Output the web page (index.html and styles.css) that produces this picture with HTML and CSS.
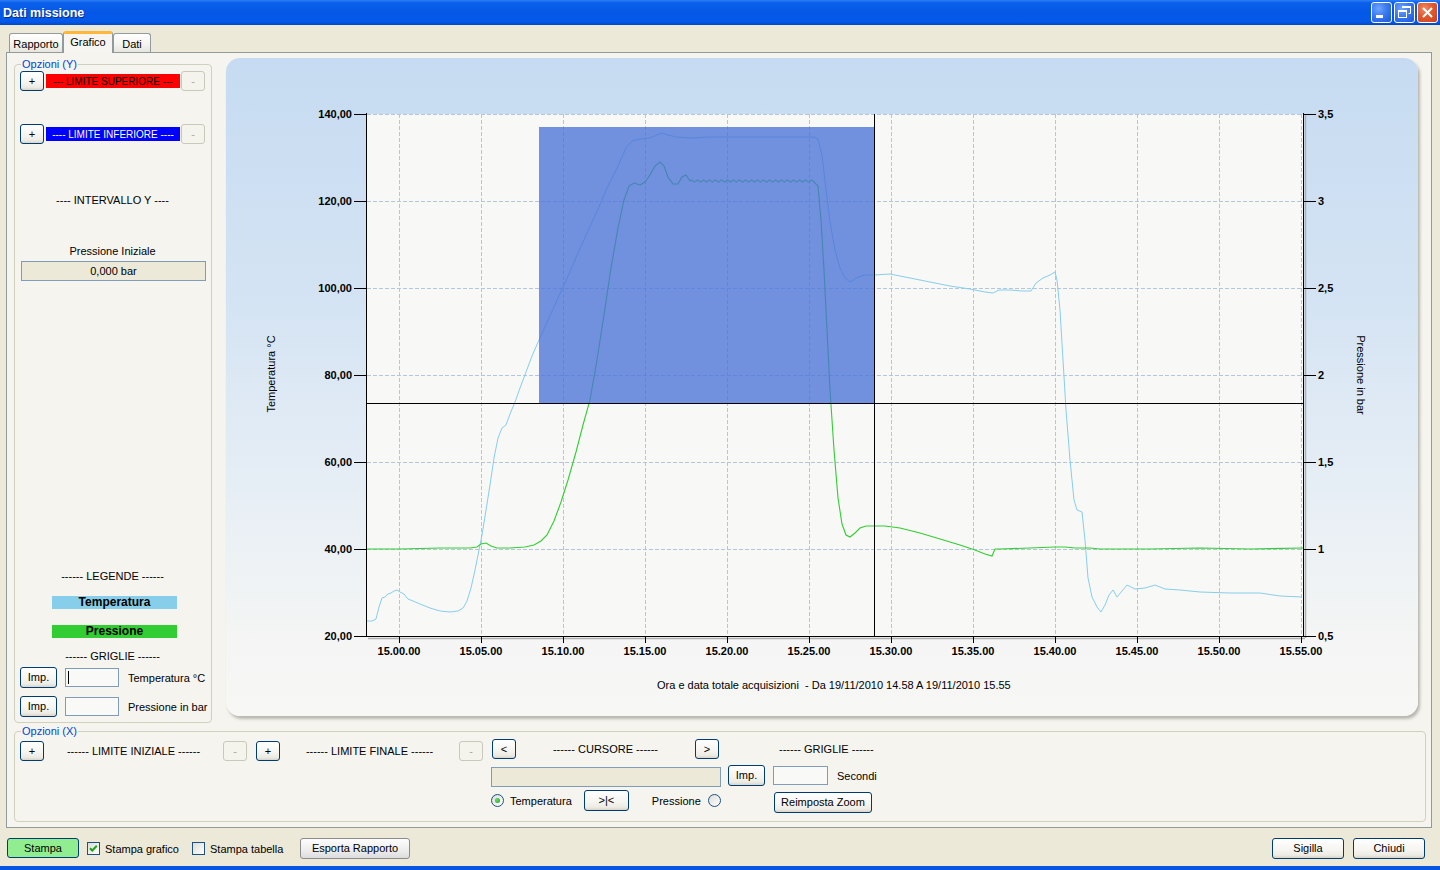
FILE: index.html
```html
<!DOCTYPE html>
<html lang="it">
<head>
<meta charset="utf-8">
<title>Dati missione</title>
<link rel="stylesheet" href="styles.css">
</head>
<body>
<div class="window">
  <div class="titlebar">
    <span class="title">Dati missione</span>
    <div class="tb-btns">
      <span class="tbb blue"><svg width="19" height="19" viewBox="0 0 19 19"><rect x="4" y="12" width="7" height="3" fill="#fff"/></svg></span>
      <span class="tbb blue"><svg width="19" height="19" viewBox="0 0 19 19"><path d="M7.5 3.5h8v7h-2" fill="none" stroke="#fff"/><rect x="7" y="3" width="9" height="2" fill="#fff"/><rect x="3.5" y="7.5" width="8" height="7" fill="none" stroke="#fff"/><rect x="3" y="7" width="9" height="2" fill="#fff"/></svg></span>
      <span class="tbb red"><svg width="19" height="19" viewBox="0 0 19 19"><path d="M5 5L14 14M14 5L5 14" stroke="#fff" stroke-width="2"/></svg></span>
    </div>
  </div>
  <div class="client">
    <div class="tabs">
      <span class="tab t-rap">Rapporto</span>
      <span class="tab t-gra active">Grafico</span>
      <span class="tab t-dat">Dati</span>
    </div>
    <div class="tabpanel">
      <div class="toprow">
        <fieldset class="group yopts">
          <legend>Opzioni (Y)</legend>
          <div class="yinner">
            <div class="limrow">
              <span class="btn b24">+</span>
              <span class="lim red">--- LIMITE SUPERIORE ---</span>
              <span class="btn b24 dis">-</span>
            </div>
            <div class="limrow second">
              <span class="btn b24">+</span>
              <span class="lim blue">---- LIMITE INFERIORE ----</span>
              <span class="btn b24 dis">-</span>
            </div>
            <div class="ctext t-int">---- INTERVALLO Y ----</div>
            <div class="ctext t-pi">Pressione Iniziale</div>
            <div class="rbox">0,000 bar</div>
            <div class="spacer"></div>
            <div class="ctext t-leg">------ LEGENDE ------</div>
            <div class="legbar temp">Temperatura</div>
            <div class="legbar pres">Pressione</div>
            <div class="ctext t-gr">------ GRIGLIE ------</div>
            <div class="improw first"><span class="btn b37">Imp.</span><span class="inp"><i class="caret"></i></span><span class="lbl">Temperatura °C</span></div>
            <div class="improw second"><span class="btn b37">Imp.</span><span class="inp"></span><span class="lbl">Pressione in bar</span></div>
          </div>
        </fieldset>
        <div class="chart">
          <svg class="plot" width="1192" height="658" viewBox="226 58 1192 658">
            <rect x="367" y="114" width="936" height="522" fill="#F8F8F6"/>
            <g class="grid">
              <path d="M367 114.5H1303M367 201.5H1303M367 288.5H1303M367 375.5H1303M367 462.5H1303M367 549.5H1303"/>
              <path d="M399.5 114V636M481.5 114V636M563.5 114V636M645.5 114V636M727.5 114V636M809.5 114V636M891.5 114V636M973.5 114V636M1055.5 114V636M1137.5 114V636M1219.5 114V636M1301.5 114V636"/>
            </g>
            <polyline class="c-temp" points="367,621 372,621 376,619 379,607 382,598 385,597 388,594 391,593 394,591 397,590 400,592 404,594 408,599 413,601 420,604 430,608 440,611 450,612 458,611 463,608 467,601 471,588 475,570 479,550 482,535 486,510 490,485 494,458 498,438 502,428 506,425 510,414 515,402 520,388 526,372 532,356 539,340 548,320 558,298 568,276 578,253 588,231 598,209 608,186 618,166 626,148 632,141 640,139 650,138 657,135 662,133 668,135 676,137 690,138 710,137 740,137 770,137 800,137 814,137 818,139 822,155 826,190 830,222 835,250 840,268 845,278 850,282 856,278 864,275 874,275 890,274 910,278 930,282 950,286 970,289 985,292 993,293 999,290 1010,290 1022,291 1031,291 1036,283 1043,278 1050,275 1055,272 1057,280 1060,310 1063,360 1066,410 1070,460 1074,500 1077,510 1082,512 1085,540 1088,578 1092,597 1097,607 1101,612 1105,605 1109,595 1113,590 1117,597 1122,591 1127,585 1135,589 1145,588 1155,585 1165,589 1180,590 1200,592 1230,593 1260,593 1280,596 1302,597"/>
            <path class="c-pres" d="M367,549 L400,549 440,548 470,548 477,547 481,544 486,543 491,546 497,548 510,548 525,547 534,545 541,541 547,535 554,521 561,502 568,480 576,452 583,425 590,400 597,360 604,315 611,268 618,228 624,200 629,186 634,183 640,185 645,182 650,175 655,166 660,162 664,166 668,177 673,184 678,184 682,177 686,175 690,181 q1.5,-2 3,0 t3,0 t3,0 t3,0 t3,0 t3,0 t3,0 t3,0 t3,0 t3,0 t3,0 t3,0 t3,0 t3,0 t3,0 t3,0 t3,0 t3,0 t3,0 t3,0 t3,0 t3,0 t3,0 t3,0 t3,0 t3,0 t3,0 t3,0 t3,0 t3,0 t3,0 t3,0 t3,0 t3,0 t3,0 t3,0 t3,0 t3,0 t3,0 t3,0 t3,0 L818,186 821,220 824,270 827,330 830,390 834,450 838,498 842,524 846,535 850,537 855,533 860,528 866,526 874,526 885,526 900,528 920,533 940,539 960,545 975,550 985,554 992,556 995,549 1000,549 1030,548 1055,547 1065,547 1075,548 1090,548 1100,549 1150,549 1200,548 1250,549 1303,548"/>
            <rect class="sel" x="539" y="127" width="335" height="276"/>
            <path class="cursor" d="M874.5 114V636M367 403.5H1303"/>
            <path class="shadow" d="M368 638.5H1305M1305.5 114V638"/>
            <path class="axis" d="M366.5 113V637M366 636.5H1304M1303.5 113V637"/>
            <path class="axis" d="M354 114.5H366M354 201.5H366M354 288.5H366M354 375.5H366M354 462.5H366M354 549.5H366M354 636.5H366M1304 114.5H1316M1304 201.5H1316M1304 288.5H1316M1304 375.5H1316M1304 462.5H1316M1304 549.5H1316M1304 636.5H1316M399.5 637V643M481.5 637V643M563.5 637V643M645.5 637V643M727.5 637V643M809.5 637V643M891.5 637V643M973.5 637V643M1055.5 637V643M1137.5 637V643M1219.5 637V643M1301.5 637V643"/>
            <g class="lbl-l">
              <text x="352" y="118">140,00</text>
              <text x="352" y="205">120,00</text>
              <text x="352" y="292">100,00</text>
              <text x="352" y="379">80,00</text>
              <text x="352" y="466">60,00</text>
              <text x="352" y="553">40,00</text>
              <text x="352" y="640">20,00</text>
            </g>
            <g class="lbl-r">
              <text x="1318" y="118">3,5</text>
              <text x="1318" y="205">3</text>
              <text x="1318" y="292">2,5</text>
              <text x="1318" y="379">2</text>
              <text x="1318" y="466">1,5</text>
              <text x="1318" y="553">1</text>
              <text x="1318" y="640">0,5</text>
            </g>
            <g class="lbl-b">
              <text x="399" y="655">15.00.00</text>
              <text x="481" y="655">15.05.00</text>
              <text x="563" y="655">15.10.00</text>
              <text x="645" y="655">15.15.00</text>
              <text x="727" y="655">15.20.00</text>
              <text x="809" y="655">15.25.00</text>
              <text x="891" y="655">15.30.00</text>
              <text x="973" y="655">15.35.00</text>
              <text x="1055" y="655">15.40.00</text>
              <text x="1137" y="655">15.45.00</text>
              <text x="1219" y="655">15.50.00</text>
              <text x="1301" y="655">15.55.00</text>
            </g>
            <text class="atitle" transform="translate(275 374) rotate(-90)">Temperatura °C</text>
            <text class="atitle" transform="translate(1357 375) rotate(90)">Pressione in bar</text>
            <text class="caption" x="657" y="689">Ora e data totale acquisizioni  - Da 19/11/2010 14.58 A 19/11/2010 15.55</text>
          </svg>
        </div>
      </div>
      <fieldset class="group xopts">
        <legend>Opzioni (X)</legend>
        <div class="xinner">
          <div class="limits">
            <span class="btn b24">+</span>
            <span class="xlab">------ LIMITE INIZIALE ------</span>
            <span class="btn b24 dis">-</span>
            <span class="btn b24 gapl">+</span>
            <span class="xlab">------ LIMITE FINALE ------</span>
            <span class="btn b24 dis">-</span>
          </div>
          <div class="cursor-grp">
            <div class="crow1">
              <span class="btn b24">&lt;</span>
              <span class="xlab">------ CURSORE ------</span>
              <span class="btn b24">&gt;</span>
            </div>
            <div class="cbox"></div>
            <div class="crow3">
              <span class="radio checked"></span>
              <span class="rl1">Temperatura</span>
              <span class="btn b45">&gt;|&lt;</span>
              <span class="rl2">Pressione</span>
              <span class="radio"></span>
            </div>
          </div>
          <div class="grid-grp">
            <div class="grow1">------ GRIGLIE ------</div>
            <div class="grow2"><span class="btn b37">Imp.</span><span class="inp w55"></span><span class="lbl">Secondi</span></div>
            <div class="grow3"><span class="btn b98">Reimposta Zoom</span></div>
          </div>
        </div>
      </fieldset>
    </div>
    <div class="bottombar">
      <div class="bleft">
        <span class="btn stampa">Stampa</span>
        <span class="chk checked"><svg width="11" height="11" viewBox="0 0 11 11"><path d="M2 5.2L4.3 7.5L8.8 2.8" fill="none" stroke="#21A121" stroke-width="2"/></svg></span>
        <span class="chklbl">Stampa grafico</span>
        <span class="chk"></span>
        <span class="chklbl">Stampa tabella</span>
        <span class="btn esporta">Esporta Rapporto</span>
      </div>
      <div class="bright">
        <span class="btn b72">Sigilla</span>
        <span class="btn b72">Chiudi</span>
      </div>
    </div>
  </div>
  <div class="frame-bottom"></div>
</div>
</body>
</html>
```
FILE: styles.css
```css
* { box-sizing: border-box; }
html, body { margin: 0; padding: 0; }
body {
  width: 1440px;
  height: 870px;
  overflow: hidden;
  background: #ECE9D8;
  font-family: "Liberation Sans", Arial, sans-serif;
  font-size: 11px;
  color: #000;
}
.window { display: flex; flex-direction: column; height: 870px; }

/* title bar */
.titlebar {
  height: 25px;
  flex: none;
  display: flex;
  align-items: center;
  justify-content: space-between;
  padding: 0 2px 0 3px;
  background: linear-gradient(#2C7CF4 0%, #0A5FEA 12%, #0558E6 50%, #0459E9 85%, #0347CC 100%);
}
.title {
  color: #fff;
  font-weight: bold;
  font-size: 12.5px;
  text-shadow: 1px 1px 0 #0B2A8F;
}
.tb-btns { display: flex; gap: 2px; margin-top: 0; }
.tbb {
  width: 21px;
  height: 21px;
  border: 1px solid #fff;
  border-radius: 3px;
  display: flex;
  align-items: center;
  justify-content: center;
}
.tbb.blue { background: radial-gradient(circle at 35% 30%, #6FA5FF 0%, #3B7AF0 45%, #1A55D8 100%); }
.tbb.red { background: radial-gradient(circle at 35% 30%, #F08A66 0%, #E0592E 45%, #C8401C 100%); }

/* client */
.client { flex: none; height: 841px; display: flex; flex-direction: column; }
.tabs {
  height: 21px;
  margin-top: 6px;
  padding-left: 9px;
  display: flex;
  align-items: flex-end;
  position: relative;
  z-index: 2;
}
.tab {
  height: 19px;
  border: 1px solid #919B9C;
  border-bottom: none;
  border-radius: 3px 3px 0 0;
  background: linear-gradient(#FFFFFF, #F3F3EF 60%, #E6E5DE);
  display: flex;
  align-items: center;
  justify-content: center;
  padding-top: 2px;
}
.t-rap { width: 54px; }
.t-gra { width: 50px; }
.t-dat { width: 38px; }
.tab.active {
  height: 22px;
  margin-bottom: -1px;
  background: #F6F5F1;
  border-top: 3px solid #FFB73A;
  border-left-color: #919B9C;
  padding-top: 0;
  padding-bottom: 4px;
}
.tabpanel {
  flex: none;
  height: 776px;
  width: 1426px;
  margin-left: 6px;
  border: 1px solid #919B9C;
  background: #F5F4EF;
  padding: 5px 5px 5px 7px;
  display: flex;
  flex-direction: column;
}
.toprow { height: 665px; display: flex; gap: 14px; flex: none; }

/* fieldsets */
.group {
  margin: 0;
  border: 1px solid #D0D0BF;
  border-radius: 4px;
  padding: 0 6px 5px 5px;
  min-width: 0;
}
.group legend {
  color: #0046D5;
  padding: 0 1px;
  line-height: 13px;
  font-size: 11px;
  margin-left: 1px;
}
.yopts { width: 198px; height: 665px; flex: none; }
.yinner { height: 646px; display: flex; flex-direction: column; }

/* buttons */
.btn {
  height: 21px;
  border: 1px solid #003C74;
  border-radius: 3px;
  background: linear-gradient(#FFFFFF 0%, #F6F5F1 55%, #ECEBE4 85%, #D8D4C8 100%);
  display: inline-flex;
  align-items: center;
  justify-content: center;
  flex: none;
  font-size: 11px;
  line-height: 1;
}
.btn.dis { border-color: #CAC8BB; color: #ACA899; background: #F4F3EC; }
.b24 { width: 24px; height: 20px; }
.b37 { width: 37px; }
.b45 { width: 45px; }
.b72 { width: 72px; }
.b98 { width: 98px; }

.limrow { display: flex; align-items: center; height: 20px; flex: none; }
.limrow.second { margin-top: 33px; }
.lim {
  width: 134px;
  height: 14px;
  margin: 0 1px 0 2px;
  display: flex;
  align-items: center;
  justify-content: center;
  font-size: 10px;
  white-space: nowrap;
}
.lim.red { background: #FF0000; color: #000; }
.lim.blue { background: #0000FF; color: #fff; }
.ctext { text-align: center; line-height: 13px; height: 13px; flex: none; }
.t-int { margin-top: 50px; }
.t-pi { margin-top: 38px; }
.rbox {
  margin: 3px 0 0 1px;
  width: 185px;
  height: 20px;
  flex: none;
  border: 1px solid #7F9DB9;
  background: #ECE9D8;
  display: flex;
  align-items: center;
  justify-content: center;
}
.spacer { flex: 1; }
.legbar {
  width: 125px;
  height: 13px;
  margin-left: 32px;
  line-height: 13px;
  text-align: center;
  font-weight: bold;
  font-size: 12px;
  flex: none;
}
.legbar.temp { margin-top: 13px; background: #87CEEB; }
.legbar.pres { margin-top: 16px; background: #32CD32; }
.t-gr { margin-top: 12px; }
.improw { display: flex; align-items: center; height: 21px; flex: none; }
.improw.first { margin-top: 4px; }
.improw.second { margin-top: 8px; }
.inp {
  width: 54px;
  height: 19px;
  margin-left: 8px;
  border: 1px solid #7F9DB9;
  background: #F9F9F7;
  display: inline-flex;
  align-items: center;
  padding-left: 2px;
  flex: none;
}
.inp.w55 { width: 55px; }
.caret { display: block; width: 1px; height: 13px; background: #000; }
.lbl { margin-left: 9px; white-space: nowrap; }

/* chart */
.chart {
  width: 1192px;
  height: 658px;
  flex: none;
  border-radius: 14px;
  background: linear-gradient(180deg, #C6DBF1 0%, #D3E3F3 35%, #E6EEF5 65%, #F4F5F4 88%, #F7F7F5 100%);
  box-shadow: 2px 3px 3px rgba(110, 110, 100, 0.45);
  overflow: hidden;
}
.plot { display: block; }
.grid path { stroke: #B3C6DE; stroke-width: 1; stroke-dasharray: 4 2; fill: none; }
.c-temp { fill: none; stroke: #87CEEB; stroke-width: 1; }
.c-pres { fill: none; stroke: #32CD32; stroke-width: 1.1; }
.sel { fill: #4A72D6; fill-opacity: 0.78; }
.cursor { stroke: #000; stroke-width: 1; fill: none; }
.shadow { stroke: #B0B0B0; stroke-width: 1.5; fill: none; }
.axis { stroke: #000; stroke-width: 1; fill: none; }
.lbl-l text { text-anchor: end; font-weight: bold; font-size: 11px; font-family: "Liberation Sans", Arial, sans-serif; }
.lbl-r text { text-anchor: start; font-weight: bold; font-size: 11px; font-family: "Liberation Sans", Arial, sans-serif; }
.lbl-b text { text-anchor: middle; font-weight: bold; font-size: 11px; font-family: "Liberation Sans", Arial, sans-serif; }
.atitle { text-anchor: middle; font-size: 11px; font-family: "Liberation Sans", Arial, sans-serif; }
.caption { font-size: 11px; white-space: pre; font-family: "Liberation Sans", Arial, sans-serif; }

/* X options */
.xopts { margin-top: 2px; width: 1412px; height: 97px; flex: none; }
.xinner { display: flex; align-items: flex-start; }
.limits { display: flex; align-items: center; height: 20px; margin-top: 3px; }
.xlab { width: 179px; text-align: center; white-space: nowrap; flex: none; }
.gapl { margin-left: 9px; }
.cursor-grp { width: 230px; margin-left: 8px; margin-top: 1px; display: flex; flex-direction: column; }
.crow1 { display: flex; align-items: center; height: 20px; padding-left: 1px; }
.cbox { margin-top: 8px; height: 20px; width: 230px; border: 1px solid #7F9DB9; background: #ECE9D8; }
.crow3 { display: flex; align-items: center; height: 21px; margin-top: 3px; }
.radio {
  width: 13px;
  height: 13px;
  border: 1px solid #1C5180;
  border-radius: 50%;
  background: linear-gradient(135deg, #DCDCD7, #FFFFFF);
  flex: none;
  display: inline-flex;
  align-items: center;
  justify-content: center;
}
.radio.checked::after {
  content: "";
  width: 5px;
  height: 5px;
  border-radius: 50%;
  background: radial-gradient(circle at 40% 40%, #6ADB6A, #21A121);
}
.rl1 { margin-left: 6px; width: 75px; }
.rl2 { margin-left: 23px; width: 57px; }
.grid-grp { width: 144px; margin-left: 7px; margin-top: 1px; display: flex; flex-direction: column; }
.grow1 { height: 20px; line-height: 20px; padding-left: 51px; white-space: nowrap; }
.grow2 { display: flex; align-items: center; height: 21px; margin-top: 6px; }
.grow2 .inp { height: 19px; }
.grow3 { height: 21px; margin-top: 6px; padding-left: 46px; display: flex; }

/* bottom bar */
.bottombar {
  height: 21px;
  margin-top: 10px;
  display: flex;
  justify-content: space-between;
  padding: 0 15px 0 7px;
  flex: none;
}
.bleft { display: flex; align-items: center; }
.bright { display: flex; align-items: center; gap: 9px; }
.btn.stampa { width: 72px; height: 20px; background: #90EE90; align-self: flex-start; }
.chk {
  width: 13px;
  height: 13px;
  border: 1px solid #1C5180;
  background: linear-gradient(135deg, #DCDCD7, #FFFFFF);
  display: inline-flex;
  align-items: center;
  justify-content: center;
  flex: none;
}
.bleft .chk.checked { margin-left: 8px; }
.bleft .chk:not(.checked) { margin-left: 0; }
.chklbl { margin-left: 5px; width: 87px; white-space: nowrap; }
.btn.esporta {
  width: 110px;
  height: 21px;
  margin-left: 3px;
  border: 1px solid #8C8C8C;
  border-radius: 3px;
  background: linear-gradient(#FDFDFD, #EDEDED 60%, #DCDCDC);
  align-self: flex-end;
}

.frame-bottom { flex: none; height: 4px; background: #0A55E0; }
```
